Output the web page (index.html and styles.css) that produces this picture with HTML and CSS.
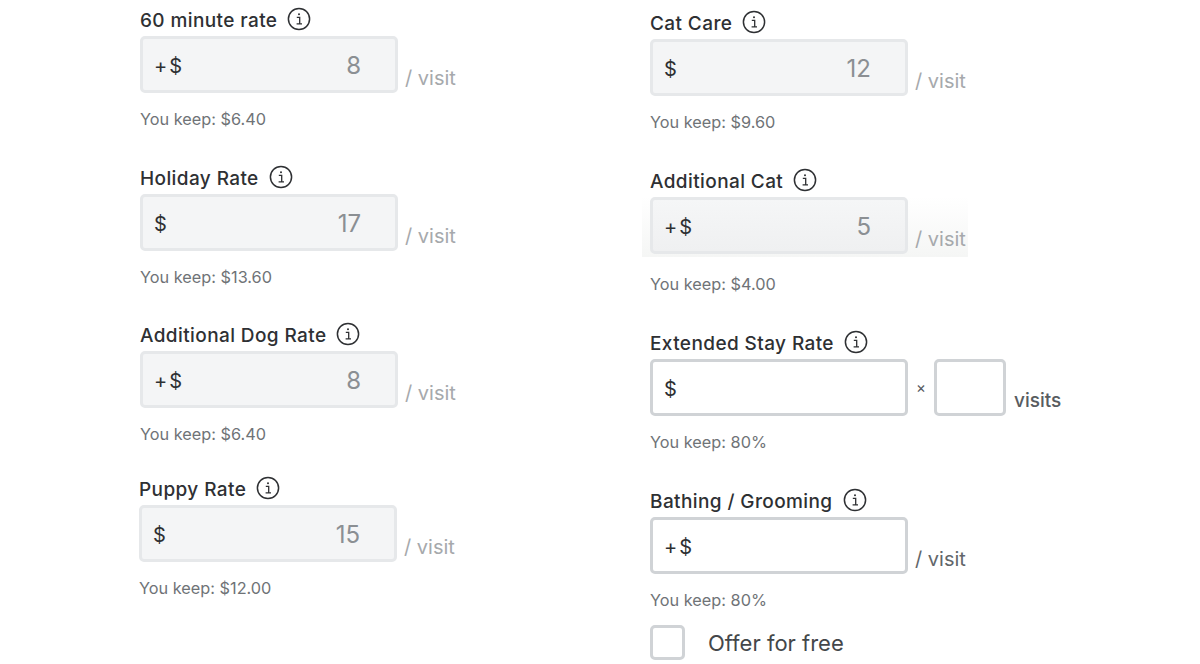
FILE: index.html
```html
<!DOCTYPE html>
<html lang="en">
<head>
	<meta charset="UTF-8" />
	<title>Rates</title>
	<link rel="stylesheet" href="styles.css">
</head>
<body>

<svg class="sprite" width="0" height="0">
	<symbol id="info" viewBox="0 0 24 24">
		<circle cx="12" cy="12" r="10.6" fill="none" stroke="currentColor" stroke-width="1.5" />
		<path d="M9.8 10.4h2.9v6.2M9.6 16.8h5.4" fill="none" stroke="currentColor" stroke-width="1.3" />
		<circle cx="12" cy="7.3" r="1" fill="currentColor" />
	</symbol>
</svg>

<div class="page">

	<div class="column column-left">
		<div class="field">
			<div class="field-label">60 minute rate <svg class="info"><use href="#info" /></svg></div>
			<div class="field-row">
				<div class="rate-box filled"><span class="prefix">+$</span><span class="value">8</span></div>
				<span class="unit">/ visit</span>
			</div>
			<div class="keep">You keep: $6.40</div>
		</div>
		<div class="field field-holiday">
			<div class="field-label">Holiday Rate <svg class="info"><use href="#info" /></svg></div>
			<div class="field-row">
				<div class="rate-box filled"><span class="prefix">$</span><span class="value">17</span></div>
				<span class="unit">/ visit</span>
			</div>
			<div class="keep">You keep: $13.60</div>
		</div>
		<div class="field">
			<div class="field-label">Additional Dog Rate <svg class="info"><use href="#info" /></svg></div>
			<div class="field-row">
				<div class="rate-box filled"><span class="prefix">+$</span><span class="value">8</span></div>
				<span class="unit">/ visit</span>
			</div>
			<div class="keep">You keep: $6.40</div>
		</div>
		<div class="field field-puppy">
			<div class="field-label">Puppy Rate <svg class="info"><use href="#info" /></svg></div>
			<div class="field-row">
				<div class="rate-box filled"><span class="prefix">$</span><span class="value">15</span></div>
				<span class="unit">/ visit</span>
			</div>
			<div class="keep">You keep: $12.00</div>
		</div>
	</div>

	<div class="column column-right">
		<div class="field">
			<div class="field-label">Cat Care <svg class="info"><use href="#info" /></svg></div>
			<div class="field-row">
				<div class="rate-box filled"><span class="prefix">$</span><span class="value">12</span></div>
				<span class="unit">/ visit</span>
			</div>
			<div class="keep">You keep: $9.60</div>
		</div>
		<div class="field">
			<div class="field-label">Additional Cat <svg class="info"><use href="#info" /></svg></div>
			<div class="field-row shaded">
				<div class="rate-box filled"><span class="prefix">+$</span><span class="value">5</span></div>
				<span class="unit">/ visit</span>
			</div>
			<div class="keep">You keep: $4.00</div>
		</div>
		<div class="field">
			<div class="field-label">Extended Stay Rate <svg class="info"><use href="#info" /></svg></div>
			<div class="field-row">
				<div class="rate-box"><span class="prefix">$</span></div>
				<span class="times">×</span>
				<div class="rate-box visits-box"></div>
				<span class="unit unit-dark">visits</span>
			</div>
			<div class="keep">You keep: 80%</div>
		</div>
		<div class="field">
			<div class="field-label">Bathing / Grooming <svg class="info"><use href="#info" /></svg></div>
			<div class="field-row">
				<div class="rate-box"><span class="prefix">+$</span></div>
				<span class="unit unit-mid">/ visit</span>
			</div>
			<div class="keep">You keep: 80%</div>
		</div>
		<div class="free-row">
			<span class="checkbox"></span>
			<span class="free-label">Offer for free</span>
		</div>
	</div>

</div>

</body>
</html>
```

FILE: styles.css
```css
* {
	box-sizing: border-box;
}

body {
	margin: 0;
	height: 664px;
	overflow: hidden;
	background-color: #fff;
	font-family: 'Inter', 'Liberation Sans', sans-serif;
	color: #2e3033;
}

.sprite {
	display: block;
}

.page {
	display: flex;
	padding-left: 140px;
}

.column {
	width: 510px;
}

.column-left {
	padding-top: 8px;
}

.column-right {
	padding-top: 11px;
}

.field {
	margin-bottom: 35px;
}

.field-holiday {
	margin-bottom: 34px;
}

.field-puppy {
	margin-top: -4px;
	margin-left: -1px;
}

.field-label {
	display: flex;
	align-items: center;
	height: 24px;
	margin-bottom: 4px;
	font-size: 19px;
	font-weight: 500;
	letter-spacing: 0.4px;
	color: #2e3033;
}

.info {
	width: 24px;
	height: 24px;
	margin-left: 10px;
	margin-top: -3px;
	color: #2e3033;
}

.field-row {
	display: flex;
	align-items: flex-end;
	height: 57px;
}

.field-row .unit {
	margin-bottom: 2px;
}

/* faint band behind the Additional Cat row */
.field-row.shaded {
	width: 326px;
	height: 60px;
	margin: 0 0 15px -8px;
	padding: 0 0 3px 8px;
	background: linear-gradient(#fff, #f5f6f5);
}

.shaded .rate-box.filled {
	background: linear-gradient(#f5f6f7, #eff0f1);
}

.rate-box {
	display: flex;
	flex-shrink: 0;
	align-items: center;
	justify-content: space-between;
	width: 258px;
	height: 57px;
	padding: 2px 34px 0 11px;
	border: 3px solid #d0d3d6;
	border-radius: 5px;
	background-color: #fff;
	font-size: 24px;
}

.rate-box.filled {
	background-color: #f4f5f6;
	border-color: #e6e8ea;
}

.prefix {
	font-size: 20px;
	letter-spacing: 2px;
	color: #2e3033;
}

.value {
	color: #8b8f93;
}

.unit {
	margin-left: 7px;
	font-size: 20px;
	line-height: 26px;
	white-space: nowrap;
	color: #a6a9ac;
}

.unit-mid {
	color: #62666a;
}

.unit-dark {
	margin-left: 8px;
	font-size: 19px;
	font-weight: 500;
	color: #585c60;
}

.times {
	align-self: center;
	width: 26px;
	text-align: center;
	font-size: 15px;
	color: #55595d;
}

.visits-box {
	width: 72px;
	padding: 0;
}

.keep {
	margin-top: 14px;
	font-size: 16.3px;
	line-height: 24px;
	color: #6f7377;
}

.free-row {
	display: flex;
	align-items: center;
	margin-top: -22px;
}

.checkbox {
	width: 35px;
	height: 35px;
	border: 3px solid #d0d3d6;
	border-radius: 5px;
}

.free-label {
	margin-left: 23px;
	font-size: 22px;
	color: #44474a;
}
```
